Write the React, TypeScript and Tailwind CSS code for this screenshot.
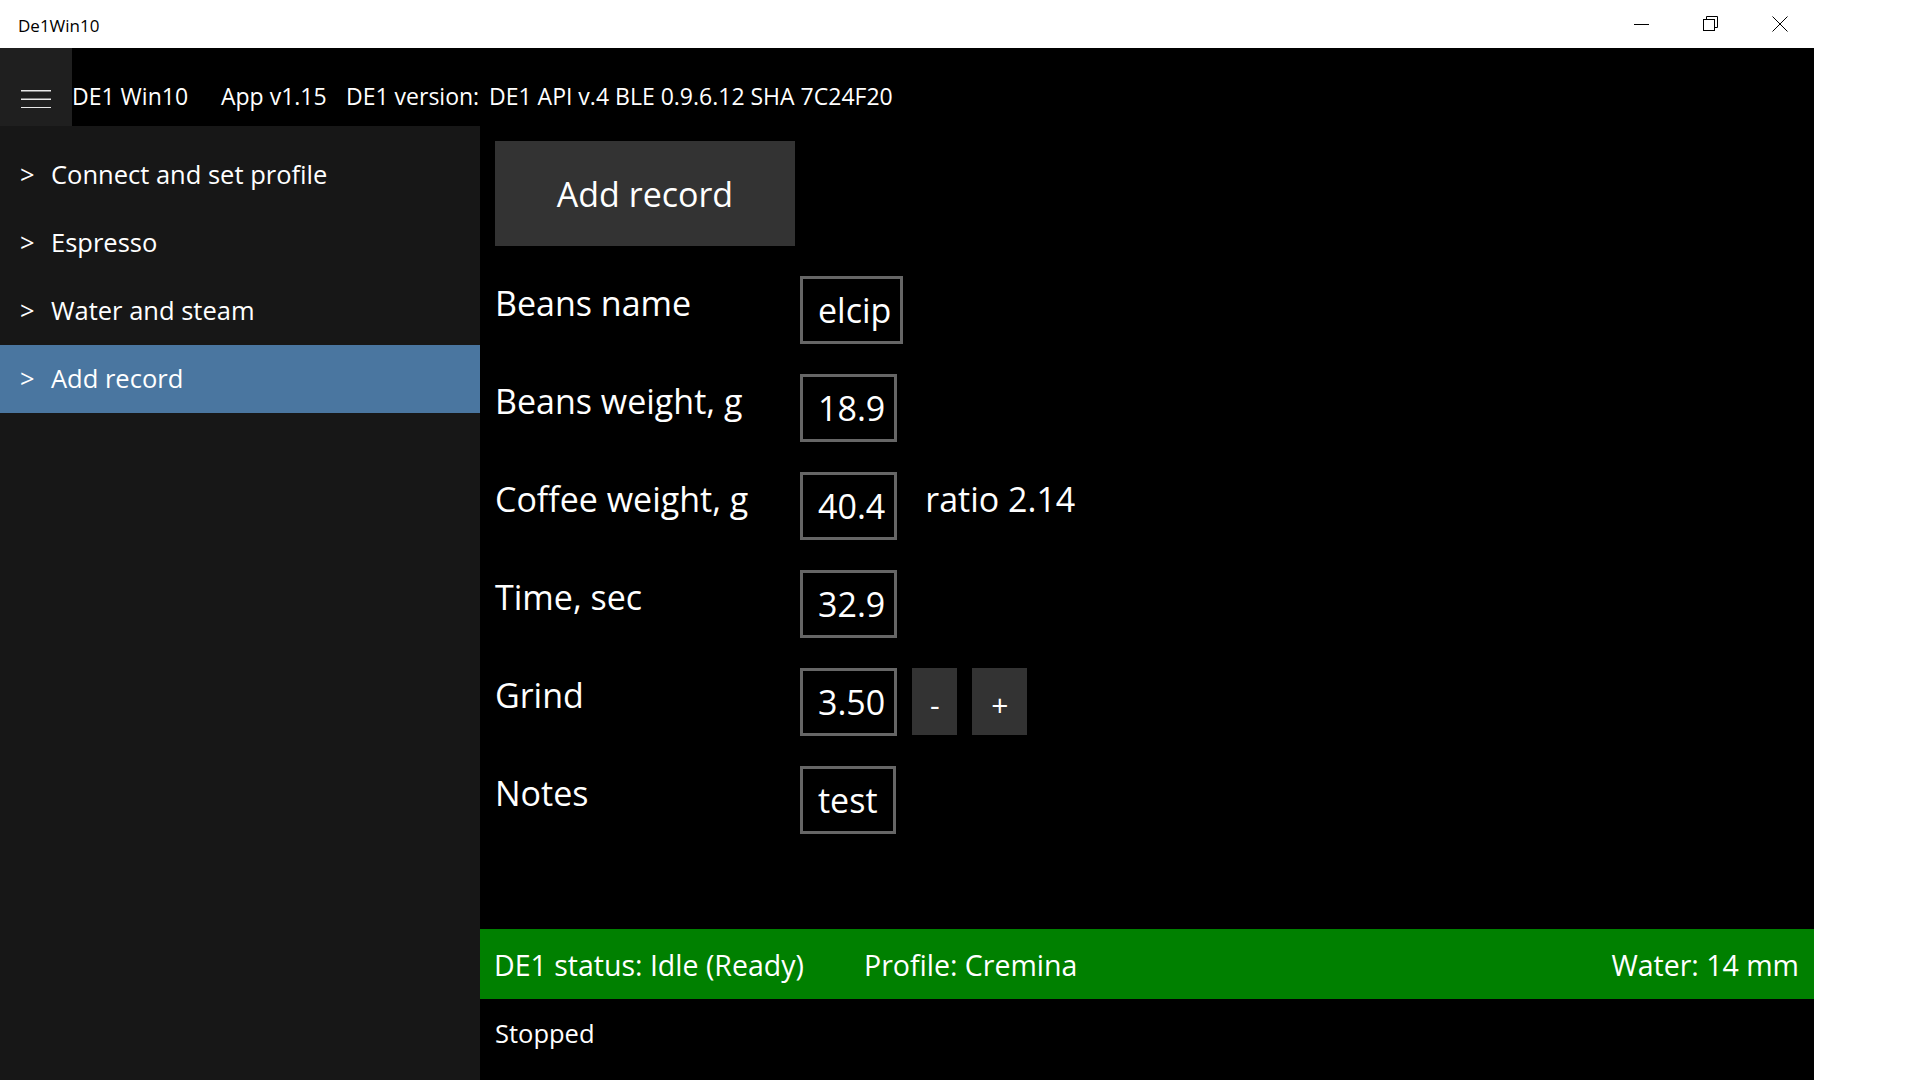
import React from "react";

const navItems = [
  { label: "Connect and set profile", active: false },
  { label: "Espresso", active: false },
  { label: "Water and steam", active: false },
  { label: "Add record", active: true },
];

function TitleBar() {
  return (
    <div className="flex h-[48px] w-[1814px] bg-white text-black">
      <div className="flex flex-1 items-center pl-[18px] pt-[2px] text-[17px] leading-none">
        De1Win10
      </div>
      <div className="flex h-full">
        <div className="flex h-full w-[69px] items-center justify-center">
          <svg width="15" height="15" viewBox="0 0 15 15">
            <path d="M0 7.5H15" stroke="#000" strokeWidth="1" />
          </svg>
        </div>
        <div className="flex h-full w-[69px] items-center justify-center">
          <svg width="16" height="16" viewBox="0 0 16 16" fill="none">
            <rect x="0.5" y="3.5" width="11" height="11" stroke="#000" />
            <path d="M3.5 3.5V0.5H14.5V11.5H11.5" stroke="#000" />
          </svg>
        </div>
        <div className="flex h-full w-[69px] items-center justify-center">
          <svg width="16" height="16" viewBox="0 0 16 16">
            <path d="M0.5 0.5L15.5 15.5M15.5 0.5L0.5 15.5" stroke="#000" strokeWidth="1" />
          </svg>
        </div>
      </div>
    </div>
  );
}

function Header() {
  return (
    <div className="flex h-[78px] bg-black text-white">
      <div className="flex h-full w-[72px] items-center justify-center bg-[#1f1f1f] pt-[23px]">
        <svg width="30" height="18" viewBox="0 0 30 18">
          <path d="M0 0.75H30M0 9.25H30M0 17.75H30" stroke="#e8e8e8" strokeWidth="1.5" />
        </svg>
      </div>
      <div className="flex items-center pt-[19px] text-[23px] leading-none whitespace-nowrap">
        <span className="w-[149px]">DE1 Win10</span>
        <span className="w-[125px]">App v1.15</span>
        <span className="w-[143px]">DE1 version:</span>
        <span>DE1 API v.4 BLE 0.9.6.12 SHA 7C24F20</span>
      </div>
    </div>
  );
}

function Sidebar() {
  return (
    <div className="flex w-[480px] flex-col bg-[#171717] pt-[15px] text-white">
      {navItems.map((item) => (
        <div
          key={item.label}
          className={
            "flex h-[68px] items-center pl-[20px] text-[25.5px] leading-none " +
            (item.active ? "bg-[#4a76a0]" : "")
          }
        >
          <span className="w-[31px]">&gt;</span>
          <span>{item.label}</span>
        </div>
      ))}
    </div>
  );
}

function ValueBox({ value }: { value: string }) {
  return (
    <div className="flex h-[68px] min-w-[96px] items-center border-[3px] border-[#666666] pl-[15px] pr-[9px] text-[34px] leading-none">
      {value}
    </div>
  );
}

function FormRow({
  label,
  value,
  children,
}: {
  label: string;
  value: string;
  children?: React.ReactNode;
}) {
  return (
    <div className="flex h-[68px] items-start">
      <div className="w-[305px] pt-[10px] text-[34px] leading-none">{label}</div>
      <ValueBox value={value} />
      {children}
    </div>
  );
}

function AddRecord() {
  return (
    <div className="flex flex-1 flex-col gap-[30px] p-[15px]">
      <button className="flex h-[105px] w-[300px] items-center justify-center bg-[#333333] text-[34px] leading-none text-white">
        Add record
      </button>
      <FormRow label="Beans name" value="elcip" />
      <FormRow label="Beans weight, g" value="18.9" />
      <FormRow label="Coffee weight, g" value="40.4">
        <div className="ml-[28px] pt-[10px] text-[34px] leading-none">ratio 2.14</div>
      </FormRow>
      <FormRow label="Time, sec" value="32.9" />
      <FormRow label="Grind" value="3.50">
        <button className="ml-[15px] flex h-[67px] w-[45px] items-center justify-center bg-[#333333] pt-[6px] text-[30px] leading-none text-white">
          -
        </button>
        <button className="ml-[15px] flex h-[67px] w-[55px] items-center justify-center bg-[#333333] pt-[6px] text-[30px] leading-none text-white">
          +
        </button>
      </FormRow>
      <FormRow label="Notes" value="test" />
    </div>
  );
}

export default function App() {
  return (
    <div className="h-[1080px] w-[1920px] overflow-hidden bg-white font-['Open_Sans',sans-serif]">
      <TitleBar />
      <div className="flex h-[1032px] w-[1814px] flex-col bg-black text-white">
        <Header />
        <div className="flex flex-1">
          <Sidebar />
          <div className="flex flex-1 flex-col">
            <AddRecord />
            <div className="flex h-[70px] items-center bg-[#008000] pl-[14px] pr-[15px] pt-[2px] text-[28.5px] leading-none whitespace-nowrap">
              <span className="w-[370px]">DE1 status: Idle (Ready)</span>
              <span className="flex-1">Profile: Cremina</span>
              <span>Water: 14 mm</span>
            </div>
            <div className="h-[81px] pl-[15px] pt-[22px] text-[25.5px] leading-none">Stopped</div>
          </div>
        </div>
      </div>
    </div>
  );
}
